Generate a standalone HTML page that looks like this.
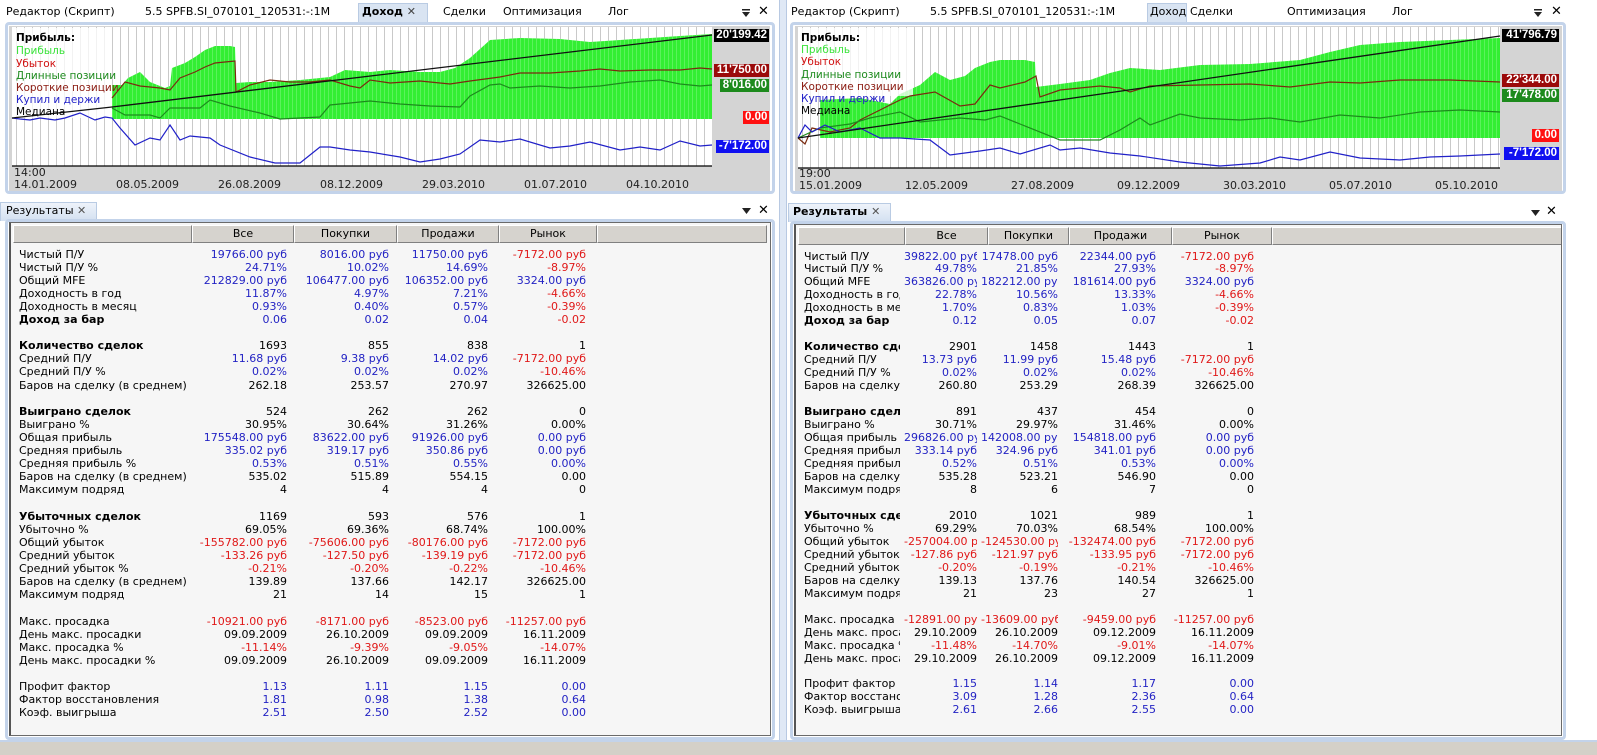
<!DOCTYPE html>
<html><head><meta charset="utf-8"><style>
*{margin:0;padding:0;box-sizing:border-box}
body{width:1597px;height:755px;position:relative;overflow:hidden;background:#fff;font-family:"DejaVu Sans","Liberation Sans",sans-serif;font-size:11px;color:#000}
.a{position:absolute;white-space:nowrap}
.frame{position:absolute;border:3px solid #c3d3ea;border-radius:4px}
.tbl{position:absolute;background:#f6f6f6;border:1px solid #6a6a6a;border-left:2px solid #555;overflow:hidden}
.hd{position:absolute;top:2px;height:18px;background:#d6d3ce;border:1px solid #808080;border-top-color:#fff;border-left-color:#fff;text-align:center;line-height:16px;font-size:11px}
.r{display:flex;white-space:nowrap}
.r span{overflow:hidden;white-space:nowrap;text-align:right}
.r span:first-child{text-align:left}
.h span:first-child{font-weight:bold}
.b{color:#2323c4}.d{color:#e01818}
#L .r{height:13.11px;line-height:13px}
#R .r{height:12.97px;line-height:13px}
#L .r span:nth-child(1){width:178px;padding-left:8px}
#L .r span:nth-child(2){width:98px}
#L .r span:nth-child(3){width:102px}
#L .r span:nth-child(4){width:99px}
#L .r span:nth-child(5){width:98px}
#R .r span:nth-child(1){width:104px;padding-left:8px}
#R .r span:nth-child(2){width:77px}
#R .r span:nth-child(3){width:81px}
#R .r span:nth-child(4){width:98px;}
#R .r span:nth-child(5){width:98px}
#R .r span:nth-child(2),#R .r span:nth-child(3){padding-left:4px}
.tab{position:absolute;font-size:11px}
.lb{position:absolute;color:#fff;font-weight:bold;font-family:"Liberation Sans",sans-serif;font-size:11.5px;height:13px;line-height:13px;padding:0 2px;text-align:right}
</style></head><body>

<div class="a" style="left:779px;top:0;width:8px;height:742px;background:#dfe8f5;border-left:1px solid #b8c9e2;border-right:1px solid #b8c9e2"></div>
<div class="a" style="left:0;top:740px;width:1597px;height:15px;background:#d4d0c8;border-top:2px solid #c3d3ea"></div>

<div class="tab" style="left:6px;top:5px">Редактор (Скрипт)</div>
<div class="tab" style="left:145px;top:5px">5.5 SPFB.SI_070101_120531:-:1M</div>
<div class="a" style="left:358px;top:3px;width:70px;height:20px;background:#d9e4f2;border:1px solid #b9cbe3;border-bottom:none"></div>
<div class="tab" style="left:362px;top:5px;font-weight:bold">Доход <span style="font-weight:normal;color:#444">✕</span></div>
<div class="tab" style="left:443px;top:5px">Сделки</div>
<div class="tab" style="left:503px;top:5px">Оптимизация</div>
<div class="tab" style="left:608px;top:5px">Лог</div>
<svg class="a" style="left:741px;top:8px" width="10" height="10"><rect x="1" y="1" width="8" height="1.5" fill="#222"/><polygon points="1,4 9,4 5,9" fill="#222"/></svg>
<div class="tab" style="left:758px;top:4px;font-size:13px">✕</div>
<div class="frame" style="left:5px;top:22px;width:770px;height:172px"></div>

<div class="tab" style="left:791px;top:5px">Редактор (Скрипт)</div>
<div class="tab" style="left:930px;top:5px">5.5 SPFB.SI_070101_120531:-:1M</div>
<div class="a" style="left:1147px;top:3px;width:40px;height:20px;background:#d9e4f2;border:1px solid #b9cbe3;border-bottom:none"></div>
<div class="tab" style="left:1150px;top:5px">Доход</div>
<div class="tab" style="left:1190px;top:5px">Сделки</div>
<div class="tab" style="left:1287px;top:5px">Оптимизация</div>
<div class="tab" style="left:1392px;top:5px">Лог</div>
<svg class="a" style="left:1533px;top:8px" width="10" height="10"><rect x="1" y="1" width="8" height="1.5" fill="#222"/><polygon points="1,4 9,4 5,9" fill="#222"/></svg>
<div class="tab" style="left:1551px;top:4px;font-size:13px">✕</div>
<div class="frame" style="left:790px;top:22px;width:776px;height:172px"></div>

<svg class="a" style="left:0;top:0" width="1597" height="200">
<defs>
<pattern id="g" x="16" y="0" width="8" height="200" patternUnits="userSpaceOnUse"><rect width="8" height="200" fill="#fff"/><rect width="1" height="200" fill="#c9c9c9"/></pattern>
<pattern id="g2" x="802" y="0" width="8" height="200" patternUnits="userSpaceOnUse"><rect width="8" height="200" fill="#fff"/><rect width="1" height="200" fill="#c9c9c9"/></pattern>
<pattern id="gb" x="0" y="0" width="4" height="200" patternUnits="userSpaceOnUse"><rect width="4" height="200" fill="#33ee33"/><rect width="1" height="200" fill="#5cf25c"/></pattern>
</defs>
<rect x="9" y="26" width="761" height="165" fill="#d4d4d4"/>
<rect x="12" y="27" width="700" height="139" fill="url(#g)"/>
<polygon fill="url(#gb)" points="112,119 112,85 122,85 128,78 140,72 150,82 165,88 170,86 172,68 185,63 195,57 205,50 215,46 230,46 235,47 236,83 250,82 270,82 300,80 330,77 345,70 370,72 390,70 420,72 440,72 455,68 470,58 490,40 520,38 560,39 590,42 620,40 650,38 680,36 712,34 712,119"/>
<rect x="12" y="28" width="100" height="90" fill="#fff" opacity="0.75"/>
<polyline fill="none" stroke="#7a2a10" stroke-width="1.2" points="112,98 125,82 140,86 160,88 170,90 180,78 195,72 205,67 215,63 225,62 235,61 236,92 250,85 270,80 290,82 310,82 330,80 350,86 360,88 370,80 390,83 420,81 450,84 470,81 500,77 520,73 550,73 580,71 600,69 620,71 650,70 680,70 700,68 712,69"/>
<polyline fill="none" stroke="#1d8a1d" stroke-width="1.2" points="112,108 125,115 150,115 160,118 170,108 200,108 210,100 230,106 260,113 280,119 300,118 320,117 330,105 350,103 370,101 400,104 430,106 460,107 470,96 490,85 500,84 510,88 540,86 570,88 600,86 630,82 660,80 680,84 700,86 712,85"/>
<polyline fill="none" stroke="#2020c8" stroke-width="1.2" points="12,118 20,119 30,120 40,118 55,120 65,118 80,113 95,120 105,117 112,118 120,128 135,145 150,138 160,140 170,125 180,140 190,136 200,137 210,138 220,145 250,157 275,163 300,163 320,147 330,147 350,150 370,152 400,157 420,162 440,159 460,154 480,140 500,142 520,139 550,148 570,146 590,142 620,150 640,147 660,150 680,141 700,146 712,145"/>
<polyline fill="none" stroke="#111" stroke-width="1.3" points="12,118 112,107 712,35"/>
<line x1="12" y1="166" x2="712" y2="166" stroke="#000" stroke-width="1.3"/>
<g font-family="DejaVu Sans, sans-serif" font-size="11" fill="#222">
<text x="14" y="176">14:00</text>
<text x="14" y="188">14.01.2009</text><text x="116" y="188">08.05.2009</text><text x="218" y="188">26.08.2009</text><text x="320" y="188">08.12.2009</text><text x="422" y="188">29.03.2010</text><text x="524" y="188">01.07.2010</text><text x="626" y="188">04.10.2010</text>
</g>
<g font-family="DejaVu Sans, sans-serif" font-size="10.5">
<text x="16" y="41" font-weight="bold" fill="#000">Прибыль:</text>
<text x="16" y="54" fill="#3be23b">Прибыль</text>
<text x="16" y="67" fill="#d01010">Убыток</text>
<text x="16" y="79" fill="#1d8a1d">Длинные позиции</text>
<text x="16" y="91" fill="#8a1a10">Короткие позиции</text>
<text x="16" y="103" fill="#2020c8">Купил и держи</text>
<text x="16" y="115" fill="#000">Медиана</text>
</g>
<rect x="795" y="26" width="767" height="165" fill="#d4d4d4"/>
<rect x="798" y="27" width="702" height="141" fill="url(#g2)"/>
<polygon fill="url(#gb)" points="820,138 820,100 860,98 890,104 900,94 920,85 935,72 950,80 965,76 975,68 990,62 1000,60 1025,60 1035,62 1036,87 1060,84 1090,80 1110,73 1130,68 1160,70 1200,65 1250,64 1300,60 1330,52 1360,45 1400,42 1450,40 1500,38 1500,138"/>
<rect x="798" y="28" width="115" height="68" fill="#fff" opacity="0.75"/>
<polyline fill="none" stroke="#7a2a10" stroke-width="1.2" points="798,138 805,144 812,128 830,132 850,128 860,120 880,110 900,100 910,96 935,92 960,106 975,104 990,85 1000,88 1025,82 1036,76 1040,97 1060,90 1100,86 1120,88 1130,92 1150,86 1200,85 1250,84 1290,87 1330,82 1360,83 1400,80 1450,80 1500,82"/>
<polyline fill="none" stroke="#1d8a1d" stroke-width="1.2" points="798,138 820,128 850,124 870,118 900,112 920,122 960,118 985,120 1000,116 1020,124 1060,140 1100,140 1120,130 1140,118 1150,125 1180,114 1200,118 1240,120 1270,118 1300,122 1340,115 1380,118 1420,112 1460,110 1500,112"/>
<polyline fill="none" stroke="#2020c8" stroke-width="1.2" points="798,138 805,125 812,132 825,125 840,132 860,128 880,138 900,138 930,140 950,155 980,151 1000,148 1020,154 1050,145 1060,150 1080,148 1110,153 1140,156 1180,162 1220,166 1260,163 1280,157 1300,160 1330,152 1360,158 1400,160 1430,157 1460,156 1500,154"/>
<polyline fill="none" stroke="#111" stroke-width="1.3" points="798,138 1500,36"/>
<line x1="798" y1="168" x2="1500" y2="168" stroke="#000" stroke-width="1.3"/>
<g font-family="DejaVu Sans, sans-serif" font-size="11" fill="#222">
<text x="799" y="177">19:00</text>
<text x="799" y="189">15.01.2009</text><text x="905" y="189">12.05.2009</text><text x="1011" y="189">27.08.2009</text><text x="1117" y="189">09.12.2009</text><text x="1223" y="189">30.03.2010</text><text x="1329" y="189">05.07.2010</text><text x="1435" y="189">05.10.2010</text>
</g>
<g font-family="DejaVu Sans, sans-serif" font-size="10.5">
<text x="801" y="41" font-weight="bold" fill="#000">Прибыль:</text>
<text x="801" y="53" fill="#3be23b">Прибыль</text>
<text x="801" y="65" fill="#d01010">Убыток</text>
<text x="801" y="78" fill="#1d8a1d">Длинные позиции</text>
<text x="801" y="90" fill="#8a1a10">Короткие позиции</text>
<text x="801" y="102" fill="#2020c8">Купил и держи</text>
<text x="801" y="114" fill="#000">Медиана</text>
</g>
</svg>
<div class="lb" style="left:714px;top:29px;width:55px;background:#000">20'199.42</div>
<div class="lb" style="left:714px;top:64px;width:55px;background:#9b0a0a">11'750.00</div>
<div class="lb" style="left:720px;top:79px;width:49px;background:#1d8a1d">8'016.00</div>
<div class="lb" style="left:743px;top:111px;width:26px;background:#ff1010">0.00</div>
<div class="lb" style="left:716px;top:140px;width:53px;background:#1010f0">-7'172.00</div>
<div class="lb" style="left:1502px;top:29px;width:57px;background:#000">41'796.79</div>
<div class="lb" style="left:1502px;top:74px;width:57px;background:#9b0a0a">22'344.00</div>
<div class="lb" style="left:1502px;top:89px;width:57px;background:#1d8a1d">17'478.00</div>
<div class="lb" style="left:1532px;top:129px;width:27px;background:#ff1010">0.00</div>
<div class="lb" style="left:1504px;top:147px;width:55px;background:#1010f0">-7'172.00</div>

<div class="a" style="left:0;top:202px;width:97px;height:19px;background:linear-gradient(#eef3fa,#d3e0f1);border:1px solid #b9cbe3;border-bottom:none"></div>
<div class="tab" style="left:6px;top:204px">Результаты <span style="color:#555">✕</span></div>
<svg class="a" style="left:742px;top:208px" width="9" height="7"><polygon points="0,0 9,0 4.5,6" fill="#222"/></svg>
<div class="tab" style="left:758px;top:203px;font-size:13px">✕</div>
<div class="a" style="left:788px;top:203px;width:103px;height:19px;background:linear-gradient(#eef3fa,#d3e0f1);border:1px solid #b9cbe3;border-bottom:none"></div>
<div class="tab" style="left:793px;top:205px;font-weight:bold">Результаты <span style="font-weight:normal;color:#555">✕</span></div>
<svg class="a" style="left:1531px;top:210px" width="9" height="7"><polygon points="0,0 9,0 4.5,6" fill="#222"/></svg>
<div class="tab" style="left:1546px;top:204px;font-size:13px">✕</div>

<div class="frame" style="left:5px;top:219px;width:770px;height:521px"></div>
<div class="frame" style="left:790px;top:221px;width:776px;height:519px"></div>

<div class="tbl" id="L" style="left:9px;top:222px;width:762px;height:514px">
<div class="hd" style="left:2px;width:179px"></div>
<div class="hd" style="left:181px;width:102px">Все</div>
<div class="hd" style="left:283px;width:103px">Покупки</div>
<div class="hd" style="left:386px;width:102px">Продажи</div>
<div class="hd" style="left:488px;width:98px">Рынок</div>
<div class="hd" style="left:586px;width:170px"></div>
<div style="position:absolute;left:0;top:24.5px">
<div class="r"><span>Чистый П/У</span><span class="b">19766.00 руб</span><span class="b">8016.00 руб</span><span class="b">11750.00 руб</span><span class="d">-7172.00 руб</span></div>
<div class="r"><span>Чистый П/У %</span><span class="b">24.71%</span><span class="b">10.02%</span><span class="b">14.69%</span><span class="d">-8.97%</span></div>
<div class="r"><span>Общий MFE</span><span class="b">212829.00 руб</span><span class="b">106477.00 руб</span><span class="b">106352.00 руб</span><span class="b">3324.00 руб</span></div>
<div class="r"><span>Доходность в год</span><span class="b">11.87%</span><span class="b">4.97%</span><span class="b">7.21%</span><span class="d">-4.66%</span></div>
<div class="r"><span>Доходность в месяц</span><span class="b">0.93%</span><span class="b">0.40%</span><span class="b">0.57%</span><span class="d">-0.39%</span></div>
<div class="r h"><span>Доход за бар</span><span class="b">0.06</span><span class="b">0.02</span><span class="b">0.04</span><span class="d">-0.02</span></div>
<div class="r"></div>
<div class="r h"><span>Количество сделок</span><span>1693</span><span>855</span><span>838</span><span>1</span></div>
<div class="r"><span>Средний П/У</span><span class="b">11.68 руб</span><span class="b">9.38 руб</span><span class="b">14.02 руб</span><span class="d">-7172.00 руб</span></div>
<div class="r"><span>Средний П/У %</span><span class="b">0.02%</span><span class="b">0.02%</span><span class="b">0.02%</span><span class="d">-10.46%</span></div>
<div class="r"><span>Баров на сделку (в среднем)</span><span>262.18</span><span>253.57</span><span>270.97</span><span>326625.00</span></div>
<div class="r"></div>
<div class="r h"><span>Выиграно сделок</span><span>524</span><span>262</span><span>262</span><span>0</span></div>
<div class="r"><span>Выиграно %</span><span>30.95%</span><span>30.64%</span><span>31.26%</span><span>0.00%</span></div>
<div class="r"><span>Общая прибыль</span><span class="b">175548.00 руб</span><span class="b">83622.00 руб</span><span class="b">91926.00 руб</span><span class="b">0.00 руб</span></div>
<div class="r"><span>Средняя прибыль</span><span class="b">335.02 руб</span><span class="b">319.17 руб</span><span class="b">350.86 руб</span><span class="b">0.00 руб</span></div>
<div class="r"><span>Средняя прибыль %</span><span class="b">0.53%</span><span class="b">0.51%</span><span class="b">0.55%</span><span class="b">0.00%</span></div>
<div class="r"><span>Баров на сделку (в среднем)</span><span>535.02</span><span>515.89</span><span>554.15</span><span>0.00</span></div>
<div class="r"><span>Максимум подряд</span><span>4</span><span>4</span><span>4</span><span>0</span></div>
<div class="r"></div>
<div class="r h"><span>Убыточных сделок</span><span>1169</span><span>593</span><span>576</span><span>1</span></div>
<div class="r"><span>Убыточно %</span><span>69.05%</span><span>69.36%</span><span>68.74%</span><span>100.00%</span></div>
<div class="r"><span>Общий убыток</span><span class="d">-155782.00 руб</span><span class="d">-75606.00 руб</span><span class="d">-80176.00 руб</span><span class="d">-7172.00 руб</span></div>
<div class="r"><span>Средний убыток</span><span class="d">-133.26 руб</span><span class="d">-127.50 руб</span><span class="d">-139.19 руб</span><span class="d">-7172.00 руб</span></div>
<div class="r"><span>Средний убыток %</span><span class="d">-0.21%</span><span class="d">-0.20%</span><span class="d">-0.22%</span><span class="d">-10.46%</span></div>
<div class="r"><span>Баров на сделку (в среднем)</span><span>139.89</span><span>137.66</span><span>142.17</span><span>326625.00</span></div>
<div class="r"><span>Максимум подряд</span><span>21</span><span>14</span><span>15</span><span>1</span></div>
<div class="r"></div>
<div class="r"><span>Макс. просадка</span><span class="d">-10921.00 руб</span><span class="d">-8171.00 руб</span><span class="d">-8523.00 руб</span><span class="d">-11257.00 руб</span></div>
<div class="r"><span>День макс. просадки</span><span>09.09.2009</span><span>26.10.2009</span><span>09.09.2009</span><span>16.11.2009</span></div>
<div class="r"><span>Макс. просадка %</span><span class="d">-11.14%</span><span class="d">-9.39%</span><span class="d">-9.05%</span><span class="d">-14.07%</span></div>
<div class="r"><span>День макс. просадки %</span><span>09.09.2009</span><span>26.10.2009</span><span>09.09.2009</span><span>16.11.2009</span></div>
<div class="r"></div>
<div class="r"><span>Профит фактор</span><span class="b">1.13</span><span class="b">1.11</span><span class="b">1.15</span><span class="b">0.00</span></div>
<div class="r"><span>Фактор восстановления</span><span class="b">1.81</span><span class="b">0.98</span><span class="b">1.38</span><span class="b">0.64</span></div>
<div class="r"><span>Коэф. выигрыша</span><span class="b">2.51</span><span class="b">2.50</span><span class="b">2.52</span><span class="b">0.00</span></div>
</div></div>

<div class="tbl" id="R" style="left:794px;top:224px;width:768px;height:512px">
<div class="hd" style="left:2px;width:107px"></div>
<div class="hd" style="left:109px;width:83px">Все</div>
<div class="hd" style="left:192px;width:81px">Покупки</div>
<div class="hd" style="left:273px;width:103px">Продажи</div>
<div class="hd" style="left:376px;width:100px">Рынок</div>
<div class="hd" style="left:476px;width:290px"></div>
<div style="position:absolute;left:0;top:24.5px">
<div class="r"><span>Чистый П/У</span><span class="b">39822.00 руб</span><span class="b">17478.00 руб</span><span class="b">22344.00 руб</span><span class="d">-7172.00 руб</span></div>
<div class="r"><span>Чистый П/У %</span><span class="b">49.78%</span><span class="b">21.85%</span><span class="b">27.93%</span><span class="d">-8.97%</span></div>
<div class="r"><span>Общий MFE</span><span class="b">363826.00 руб</span><span class="b">182212.00 руб</span><span class="b">181614.00 руб</span><span class="b">3324.00 руб</span></div>
<div class="r"><span>Доходность в год</span><span class="b">22.78%</span><span class="b">10.56%</span><span class="b">13.33%</span><span class="d">-4.66%</span></div>
<div class="r"><span>Доходность в месяц</span><span class="b">1.70%</span><span class="b">0.83%</span><span class="b">1.03%</span><span class="d">-0.39%</span></div>
<div class="r h"><span>Доход за бар</span><span class="b">0.12</span><span class="b">0.05</span><span class="b">0.07</span><span class="d">-0.02</span></div>
<div class="r"></div>
<div class="r h"><span>Количество сделок</span><span>2901</span><span>1458</span><span>1443</span><span>1</span></div>
<div class="r"><span>Средний П/У</span><span class="b">13.73 руб</span><span class="b">11.99 руб</span><span class="b">15.48 руб</span><span class="d">-7172.00 руб</span></div>
<div class="r"><span>Средний П/У %</span><span class="b">0.02%</span><span class="b">0.02%</span><span class="b">0.02%</span><span class="d">-10.46%</span></div>
<div class="r"><span>Баров на сделку (в среднем)</span><span>260.80</span><span>253.29</span><span>268.39</span><span>326625.00</span></div>
<div class="r"></div>
<div class="r h"><span>Выиграно сделок</span><span>891</span><span>437</span><span>454</span><span>0</span></div>
<div class="r"><span>Выиграно %</span><span>30.71%</span><span>29.97%</span><span>31.46%</span><span>0.00%</span></div>
<div class="r"><span>Общая прибыль</span><span class="b">296826.00 руб</span><span class="b">142008.00 руб</span><span class="b">154818.00 руб</span><span class="b">0.00 руб</span></div>
<div class="r"><span>Средняя прибыль</span><span class="b">333.14 руб</span><span class="b">324.96 руб</span><span class="b">341.01 руб</span><span class="b">0.00 руб</span></div>
<div class="r"><span>Средняя прибыль %</span><span class="b">0.52%</span><span class="b">0.51%</span><span class="b">0.53%</span><span class="b">0.00%</span></div>
<div class="r"><span>Баров на сделку (в среднем)</span><span>535.28</span><span>523.21</span><span>546.90</span><span>0.00</span></div>
<div class="r"><span>Максимум подряд</span><span>8</span><span>6</span><span>7</span><span>0</span></div>
<div class="r"></div>
<div class="r h"><span>Убыточных сделок</span><span>2010</span><span>1021</span><span>989</span><span>1</span></div>
<div class="r"><span>Убыточно %</span><span>69.29%</span><span>70.03%</span><span>68.54%</span><span>100.00%</span></div>
<div class="r"><span>Общий убыток</span><span class="d">-257004.00 руб</span><span class="d">-124530.00 руб</span><span class="d">-132474.00 руб</span><span class="d">-7172.00 руб</span></div>
<div class="r"><span>Средний убыток</span><span class="d">-127.86 руб</span><span class="d">-121.97 руб</span><span class="d">-133.95 руб</span><span class="d">-7172.00 руб</span></div>
<div class="r"><span>Средний убыток %</span><span class="d">-0.20%</span><span class="d">-0.19%</span><span class="d">-0.21%</span><span class="d">-10.46%</span></div>
<div class="r"><span>Баров на сделку (в среднем)</span><span>139.13</span><span>137.76</span><span>140.54</span><span>326625.00</span></div>
<div class="r"><span>Максимум подряд</span><span>21</span><span>23</span><span>27</span><span>1</span></div>
<div class="r"></div>
<div class="r"><span>Макс. просадка</span><span class="d">-12891.00 руб</span><span class="d">-13609.00 руб</span><span class="d">-9459.00 руб</span><span class="d">-11257.00 руб</span></div>
<div class="r"><span>День макс. просадки</span><span>29.10.2009</span><span>26.10.2009</span><span>09.12.2009</span><span>16.11.2009</span></div>
<div class="r"><span>Макс. просадка %</span><span class="d">-11.48%</span><span class="d">-14.70%</span><span class="d">-9.01%</span><span class="d">-14.07%</span></div>
<div class="r"><span>День макс. просадки %</span><span>29.10.2009</span><span>26.10.2009</span><span>09.12.2009</span><span>16.11.2009</span></div>
<div class="r"></div>
<div class="r"><span>Профит фактор</span><span class="b">1.15</span><span class="b">1.14</span><span class="b">1.17</span><span class="b">0.00</span></div>
<div class="r"><span>Фактор восстановления</span><span class="b">3.09</span><span class="b">1.28</span><span class="b">2.36</span><span class="b">0.64</span></div>
<div class="r"><span>Коэф. выигрыша</span><span class="b">2.61</span><span class="b">2.66</span><span class="b">2.55</span><span class="b">0.00</span></div>
</div></div>
</body></html>
